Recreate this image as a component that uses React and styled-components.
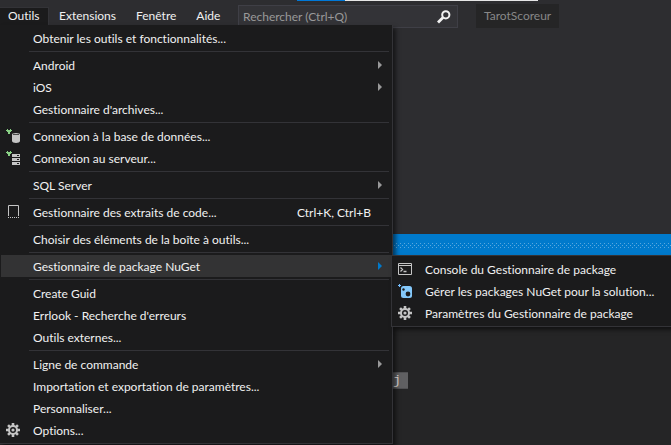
import React from "react";
import styled, { createGlobalStyle, css } from "styled-components";

const GlobalStyle = createGlobalStyle`
  *, *::before, *::after { box-sizing: border-box; }
  html, body { margin: 0; background: #2d2d30; }
  body {
    color: #f1f1f1;
    font: 12px/16px Lato, "Noto Sans", sans-serif;
    font-variant-ligatures: none;
    overflow: hidden;
  }
  button, input { font: inherit; font-variant-ligatures: none; color: inherit; }
`;

const Page = styled.div`
  display: flex;
  flex-direction: column;
  min-height: 100vh;
`;

const TopEdge = styled.div`
  display: flex;
  height: 1px;
  padding-left: 297px;
`;

const EdgePart = styled.span`
  width: ${(p) => p.$width}px;
  background: ${(p) => p.$color};
`;

const Header = styled.header`
  display: flex;
  align-items: flex-start;
  height: 27px;
  padding-top: 3px;
`;

const MenuBar = styled.nav`
  display: flex;
  width: 238px;
  padding-top: 3px;
`;

const MenuSlot = styled.div`
  position: relative;
`;

const BarButton = styled.button`
  display: block;
  height: 18px;
  padding: 0 10px;
  border: 0;
  background: none;
  line-height: 18px;
  white-space: nowrap;
  ${(p) =>
    p.$open &&
    css`
      width: 49px;
      padding: 0 8px;
      background: #1b1b1c;
      box-shadow: inset -1px 1px #333337;
      text-align: left;
    `}
`;

const panel = css`
  position: absolute;
  background: #1b1b1c;
  border: solid #333337;
  box-shadow: 3px 3px 4px rgba(0, 0, 0, 0.5);
  z-index: 2;
`;

const MainMenu = styled.div`
  ${panel}
  top: 100%;
  left: 0;
  width: 393px;
  padding: 2px 1px;
  border-width: 0 1px 1px 0;
`;

const SubMenu = styled.div`
  ${panel}
  top: 0;
  left: 100%;
  width: 300px;
  padding: 2px 1px;
  border-width: 1px;
`;

const Row = styled.div`
  position: relative;
`;

const Item = styled.button`
  display: grid;
  grid-template-columns: 32px 1fr auto 20px;
  align-items: center;
  width: 100%;
  height: 22px;
  padding: 0;
  border: 0;
  background: ${(p) => (p.$active ? "#333334" : "transparent")};
  text-align: left;
  white-space: nowrap;
`;

const ItemText = styled.span`
  padding-top: 2px;
`;

const IconCell = styled.span`
  display: flex;
  padding-left: 4px;
`;

const Arrow = styled.span`
  justify-self: start;
  margin-left: 7px;
  border: solid transparent;
  border-width: 4px 0 4px 4px;
  border-left-color: ${(p) => (p.$active ? "#007acc" : "#999999")};
`;

const Separator = styled.hr`
  height: 1px;
  margin: 2px 2px 2px 28px;
  border: 0;
  background: #333337;
`;

const SearchBox = styled.label`
  display: flex;
  align-items: center;
  width: 220px;
  height: 23px;
  margin-top: 1px;
  padding: 0 5px 0 4px;
  border: 1px solid #3f3f46;
  background: #333337;
`;

const SearchInput = styled.input`
  flex: 1;
  min-width: 0;
  padding: 0;
  border: 0;
  outline: 0;
  background: none;
  &::placeholder { color: #999999; opacity: 1; }
`;

const SolutionName = styled.div`
  height: 24px;
  margin-left: 18px;
  padding: 0 8px;
  background: #252526;
  color: #888888;
  line-height: 24px;
`;

const Workspace = styled.main`
  display: flex;
  flex: 1;
  flex-direction: column;
  padding-top: 206px;
`;

const ToolTitle = styled.div`
  height: 21px;
  padding-top: 9px;
  background: #007acc;
`;

const dot = "linear-gradient(#59a8de, #59a8de)";

const Grip = styled.div`
  display: grid;
  grid-template-rows: repeat(3, 1px);
  row-gap: 1px;
`;

const GripDots = styled.span`
  background: repeating-linear-gradient(
    90deg,
    ${(p) => (p.$shifted ? "transparent 0 2px, #59a8de 2px 3px, transparent 3px 4px" : "#59a8de 0 1px, transparent 1px 4px")}
  );
`;

const Editor = styled.div`
  flex: 1;
  padding: 117px 0 0 384px;
  background: #252526;
`;

const Code = styled.code`
  display: inline-block;
  width: 24px;
  height: 17px;
  padding-left: 9px;
  border: solid #505052;
  border-width: 1px 0;
  background: #606062;
  color: #dcdcdc;
  font: 13px/15px "Liberation Mono", monospace;
`;

const Svg = ({ children }) => (
  <svg width="16" height="16" viewBox="0 0 16 16" aria-hidden="true">
    {children}
  </svg>
);

const Plug = () => (
  <path d="M2 1h1v1h2V1h1v1h1v1H6v1H5v2H3V4H2V3H1V2h1z" fill="#89d185" />
);

const DatabaseIcon = () => (
  <Svg>
    <Plug />
    <path d="M7 7v6c0 2.6 8 2.6 8 0V7z" fill="#c5c5c5" />
    <ellipse cx="11" cy="6.5" rx="4" ry="1.5" fill="#c5c5c5" />
    <path d="M8 6h6v1H8z" fill="#4a4a4b" />
  </Svg>
);

const ServerIcon = () => (
  <Svg>
    <Plug />
    <path d="M7 4h8v3H7zM7 8h8v3H7zM7 12h8v3H7z" fill="#c5c5c5" />
    <path d="M12 5h2v1h-2zM12 9h2v1h-2zM12 13h2v1h-2z" fill="#1b1b1c" />
  </Svg>
);

const SnippetIcon = () => (
  <Svg>
    <path d="M3.5 12V1.5h10V12" fill="none" stroke="#c5c5c5" />
    <path d="M3 13.5h11" fill="none" stroke="#c5c5c5" strokeDasharray="1 1" />
  </Svg>
);

const ConsoleIcon = () => (
  <Svg>
    <path d="M1.5 2.5h13v11h-13zM1.5 4.5h13" fill="none" stroke="#c5c5c5" />
    <path d="M3.5 6.5l2 2-2 2M6.5 10.5h3" fill="none" stroke="#c5c5c5" strokeWidth="1.3" />
  </Svg>
);

const PackageIcon = () => (
  <Svg>
    <path d="M2 1h1v1h1v1H3v1H2V3H1V2h1z" fill="#75beff" />
    <rect x="4" y="3" width="11" height="12" rx="2.5" fill="#84c8fa" />
    <circle cx="6.5" cy="6.5" r="1.2" fill="#1b1b1c" />
    <circle cx="11" cy="11" r="2.4" fill="#1b1b1c" />
  </Svg>
);

const gearTeeth = "M6.7 1h2.6v14H6.700zM1 6.700h14v2.600H1z";

const GearIcon = () => (
  <Svg>
    <path d={gearTeeth} fill="#c5c5c5" />
    <path d={gearTeeth} fill="#c5c5c5" transform="rotate(45 8 8)" />
    <circle cx="8" cy="8" r="5" fill="#c5c5c5" />
    <circle cx="8" cy="8" r="2.3" fill="none" stroke="#1b1b1c" strokeWidth="1.4" />
  </Svg>
);

const SearchIcon = () => (
  <Svg>
    <circle cx="9.8" cy="5.8" r="3.6" fill="none" stroke="#f1f1f1" strokeWidth="2" />
    <path d="M7 8.6L2 13.6" stroke="#f1f1f1" strokeWidth="2.8" />
  </Svg>
);

const packageItems = [
  { label: "Console du Gestionnaire de package", icon: <ConsoleIcon /> },
  { label: "Gérer les packages NuGet pour la solution...", icon: <PackageIcon /> },
  { label: "Paramètres du Gestionnaire de package", icon: <GearIcon /> },
];

const groups = [
  [{ label: "Obtenir les outils et fonctionnalités..." }],
  [
    { label: "Android", arrow: true },
    { label: "iOS", arrow: true },
    { label: "Gestionnaire d'archives..." },
  ],
  [
    { label: "Connexion à la base de données...", icon: <DatabaseIcon /> },
    { label: "Connexion au serveur...", icon: <ServerIcon /> },
  ],
  [{ label: "SQL Server", arrow: true }],
  [{ label: "Gestionnaire des extraits de code...", icon: <SnippetIcon />, keys: "Ctrl+K, Ctrl+B" }],
  [{ label: "Choisir des éléments de la boîte à outils..." }],
  [{ label: "Gestionnaire de package NuGet", arrow: true, children: packageItems }],
  [
    { label: "Create Guid" },
    { label: "Errlook - Recherche d'erreurs" },
    { label: "Outils externes..." },
  ],
  [
    { label: "Ligne de commande", arrow: true },
    { label: "Importation et exportation de paramètres..." },
    { label: "Personnaliser..." },
    { label: "Options...", icon: <GearIcon /> },
  ],
];

function MenuItem({ item }) {
  const active = Boolean(item.children);
  return (
    <Row role="none">
      <Item
        type="button"
        role="menuitem"
        $active={active}
        aria-haspopup={item.arrow ? "menu" : undefined}
        aria-expanded={active || undefined}
      >
        <IconCell>{item.icon}</IconCell>
        <ItemText>{item.label}</ItemText>
        <ItemText>{item.keys}</ItemText>
        {item.arrow && <Arrow $active={active} />}
      </Item>
      {item.children && (
        <SubMenu role="menu" aria-label={item.label}>
          {item.children.map((child) => (
            <MenuItem key={child.label} item={child} />
          ))}
        </SubMenu>
      )}
    </Row>
  );
}

export default function App() {
  return (
    <Page>
      <GlobalStyle />
      <TopEdge>
        <EdgePart $width={48} $color="#0078d7" />
        <EdgePart $width={193} $color="#e6e6e6" />
      </TopEdge>
      <Header>
        <MenuBar>
          <MenuSlot>
            <BarButton type="button" $open aria-expanded="true" aria-haspopup="menu">
              Outils
            </BarButton>
            <MainMenu role="menu" aria-label="Outils">
              {groups.map((group, i) => (
                <React.Fragment key={group[0].label}>
                  {i > 0 && <Separator />}
                  {group.map((item) => (
                    <MenuItem key={item.label} item={item} />
                  ))}
                </React.Fragment>
              ))}
            </MainMenu>
          </MenuSlot>
          <BarButton type="button">Extensions</BarButton>
          <BarButton type="button">Fenêtre</BarButton>
          <BarButton type="button">Aide</BarButton>
        </MenuBar>
        <SearchBox>
          <SearchInput aria-label="Rechercher" placeholder="Rechercher (Ctrl+Q)" />
          <SearchIcon />
        </SearchBox>
        <SolutionName>TarotScoreur</SolutionName>
      </Header>
      <Workspace>
        <ToolTitle>
          <Grip>
            <GripDots />
            <GripDots $shifted />
            <GripDots />
          </Grip>
        </ToolTitle>
        <Editor>
          <Code>j</Code>
        </Editor>
      </Workspace>
    </Page>
  );
}
